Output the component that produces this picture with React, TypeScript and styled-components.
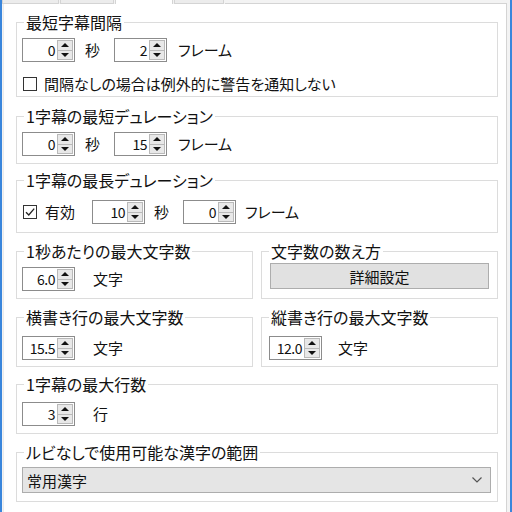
import React from 'react';
import styled, { createGlobalStyle } from 'styled-components';

const GlobalStyle = createGlobalStyle`
  html, body {
    margin: 0;
    padding: 0;
    background: #ffffff;
  }
  body {
    font-family: "Noto Sans CJK JP", "Noto Sans", sans-serif;
    font-feature-settings: "palt";
    color: #111;
  }
`;

const Frame = styled.div`
  width: 512px;
  height: 512px;
  display: flex;
  overflow: hidden;
  background: #f3f3f3;
`;

const FrameEdge = styled.div`
  width: 2px;
  flex: none;
  background: #3a86dc;
`;

const Body = styled.div`
  flex: 1;
  display: flex;
  flex-direction: column;
  padding-right: 3px;
`;

const TabStrip = styled.div`
  height: 4px;
  display: flex;
  flex: none;
`;

const Tab = styled.div<{ $w: number; $active?: boolean }>`
  width: ${(p) => p.$w}px;
  flex: none;
  box-sizing: border-box;
  background: ${(p) => (p.$active ? '#ffffff' : '#ececec')};
  border-left: 1px solid #d4d4d4;
  border-right: 1px solid #d4d4d4;
  border-bottom: ${(p) => (p.$active ? 'none' : '1px solid #d4d4d4')};
  margin-right: 1px;
`;

const TabFiller = styled.div`
  flex: 1;
  border-bottom: 1px solid #d4d4d4;
`;

const Panel = styled.div`
  flex: 1;
  margin-left: 1px;
  background: #ffffff;
  border-right: 1px solid #d4d4d4;
  border-left: 1px solid #ececec;
  padding: 18px 8px 0 12px;
  display: flex;
  flex-direction: column;
`;

const Group = styled.div<{ $top: number; $pt: number; $pb: number; $pl?: number; $pr?: number }>`
  position: relative;
  margin-top: ${(p) => p.$top}px;
  border: 1px solid #dcdcdc;
  padding: ${(p) => p.$pt}px ${(p) => p.$pr ?? 6}px ${(p) => p.$pb}px ${(p) => p.$pl ?? 5}px;
  display: flex;
  flex-direction: column;
`;

const Legend = styled.span`
  position: absolute;
  top: -11px;
  left: 7px;
  padding: 0 2px;
  background: #ffffff;
  font-size: 16px;
  line-height: 20px;
  white-space: nowrap;
`;

const Pair = styled.div`
  margin-top: 18px;
  display: grid;
  grid-template-columns: 237px 237px;
  column-gap: 8px;
`;

const Row = styled.div<{ $h?: number }>`
  display: flex;
  align-items: center;
  height: ${(p) => p.$h ?? 24}px;
`;

const Label = styled.span<{ $ml: number }>`
  margin-left: ${(p) => p.$ml}px;
  font-size: 15px;
  line-height: 20px;
  white-space: nowrap;
`;

const SpinBox = styled.div<{ $ml?: number }>`
  margin-left: ${(p) => p.$ml ?? 0}px;
  width: 53px;
  height: 24px;
  flex: none;
  box-sizing: border-box;
  border: 1px solid #8c8c8c;
  background: #fff;
  display: flex;
  align-items: center;
  justify-content: flex-end;
  padding-right: 1px;
`;

const SpinValue = styled.span`
  font-size: 14px;
  line-height: 18px;
  letter-spacing: -0.5px;
  margin-right: 2px;
`;

const SpinButtons = styled.div`
  width: 16px;
  height: 20px;
  display: flex;
  flex-direction: column;
`;

const SpinArrow = styled.div<{ $down?: boolean }>`
  flex: 1;
  box-sizing: border-box;
  background: #e8e8e8;
  border: 1px solid #b9b9b9;
  ${(p) => (p.$down ? 'border-top: none;' : '')}
  display: flex;
  align-items: center;
  justify-content: center;
  &::after {
    content: '';
    width: 0;
    height: 0;
    border-left: 4px solid transparent;
    border-right: 4px solid transparent;
    ${(p) => (p.$down ? 'border-top: 4px solid #111;' : 'border-bottom: 4px solid #111;')}
  }
`;

const CheckBox = styled.div<{ $ml?: number }>`
  margin-left: ${(p) => p.$ml ?? 1}px;
  width: 14px;
  height: 14px;
  flex: none;
  box-sizing: border-box;
  border: 1px solid #333;
  background: #fff;
  display: flex;
  align-items: center;
  justify-content: center;
`;

const Button = styled.div`
  margin-left: 3px;
  margin-right: 2px;
  height: 26px;
  box-sizing: border-box;
  background: #e1e1e1;
  border: 1px solid #adadad;
  display: flex;
  align-items: center;
  justify-content: center;
  font-size: 15px;
`;

const Combo = styled.div`
  height: 26px;
  box-sizing: border-box;
  background: #e5e5e5;
  border: 1px solid #adadad;
  display: flex;
  align-items: center;
  justify-content: space-between;
  padding: 0 8px 0 4px;
  font-size: 15px;
`;

const Spin: React.FC<{ value: string; ml?: number }> = ({ value, ml }) => (
  <SpinBox $ml={ml}>
    <SpinValue>{value}</SpinValue>
    <SpinButtons>
      <SpinArrow />
      <SpinArrow $down />
    </SpinButtons>
  </SpinBox>
);

const Check: React.FC<{ checked?: boolean }> = ({ checked }) => (
  <CheckBox>
    {checked && (
      <svg width="12" height="12" viewBox="0 0 12 12">
        <path d="M2 6.2 L4.8 9 L10.2 2.6" fill="none" stroke="#222" strokeWidth="1.3" />
      </svg>
    )}
  </CheckBox>
);

const App: React.FC = () => {
  return (
    <>
      <GlobalStyle />
      <Frame>
        <FrameEdge />
        <Body>
          <TabStrip>
            <Tab $w={57} />
            <Tab $w={54} />
            <Tab $w={58} $active />
            <Tab $w={50} />
            <TabFiller />
          </TabStrip>
          <Panel>
            <Group $top={0} $pt={15} $pb={2}>
              <Legend>最短字幕間隔</Legend>
              <Row>
                <Spin value="0" />
                <Label $ml={10}>秒</Label>
                <Spin value="2" ml={14} />
                <Label $ml={11}>フレーム</Label>
              </Row>
              <Row $h={20} style={{ marginTop: 12 }}>
                <Check />
                <Label $ml={7}>間隔なしの場合は例外的に警告を通知しない</Label>
              </Row>
            </Group>

            <Group $top={19} $pt={15} $pb={7}>
              <Legend>1字幕の最短デュレーション</Legend>
              <Row>
                <Spin value="0" />
                <Label $ml={10}>秒</Label>
                <Spin value="15" ml={14} />
                <Label $ml={11}>フレーム</Label>
              </Row>
            </Group>

            <Group $top={16} $pt={19} $pb={8}>
              <Legend>1字幕の最長デュレーション</Legend>
              <Row>
                <Check checked />
                <Label $ml={8}>有効</Label>
                <Spin value="10" ml={17} />
                <Label $ml={9}>秒</Label>
                <Spin value="0" ml={14} />
                <Label $ml={9}>フレーム</Label>
              </Row>
            </Group>

            <Pair>
              <Group $top={0} $pt={15} $pb={7}>
                <Legend>1秒あたりの最大文字数</Legend>
                <Row>
                  <Spin value="6.0" />
                  <Label $ml={18}>文字</Label>
                </Row>
              </Group>
              <Group $top={0} $pt={11} $pb={8} $pl={5} $pr={6}>
                <Legend>文字数の数え方</Legend>
                <Button>詳細設定</Button>
              </Group>
            </Pair>

            <Pair>
              <Group $top={0} $pt={18} $pb={6}>
                <Legend>横書き行の最大文字数</Legend>
                <Row>
                  <Spin value="15.5" />
                  <Label $ml={18}>文字</Label>
                </Row>
              </Group>
              <Group $top={0} $pt={18} $pb={6} $pl={7}>
                <Legend>縦書き行の最大文字数</Legend>
                <Row>
                  <Spin value="12.0" />
                  <Label $ml={16}>文字</Label>
                </Row>
              </Group>
            </Pair>

            <Group $top={17} $pt={17} $pb={7}>
              <Legend>1字幕の最大行数</Legend>
              <Row>
                <Spin value="3" />
                <Label $ml={18}>行</Label>
              </Row>
            </Group>

            <Group $top={18} $pt={14} $pb={8}>
              <Legend>ルビなしで使用可能な漢字の範囲</Legend>
              <Combo>
                <span>常用漢字</span>
                <svg width="10" height="6" viewBox="0 0 10 6">
                  <path d="M0.5 0.5 L5 5 L9.5 0.5" fill="none" stroke="#555" strokeWidth="1.2" />
                </svg>
              </Combo>
            </Group>
          </Panel>
        </Body>
        <FrameEdge />
      </Frame>
    </>
  );
};

export default App;
